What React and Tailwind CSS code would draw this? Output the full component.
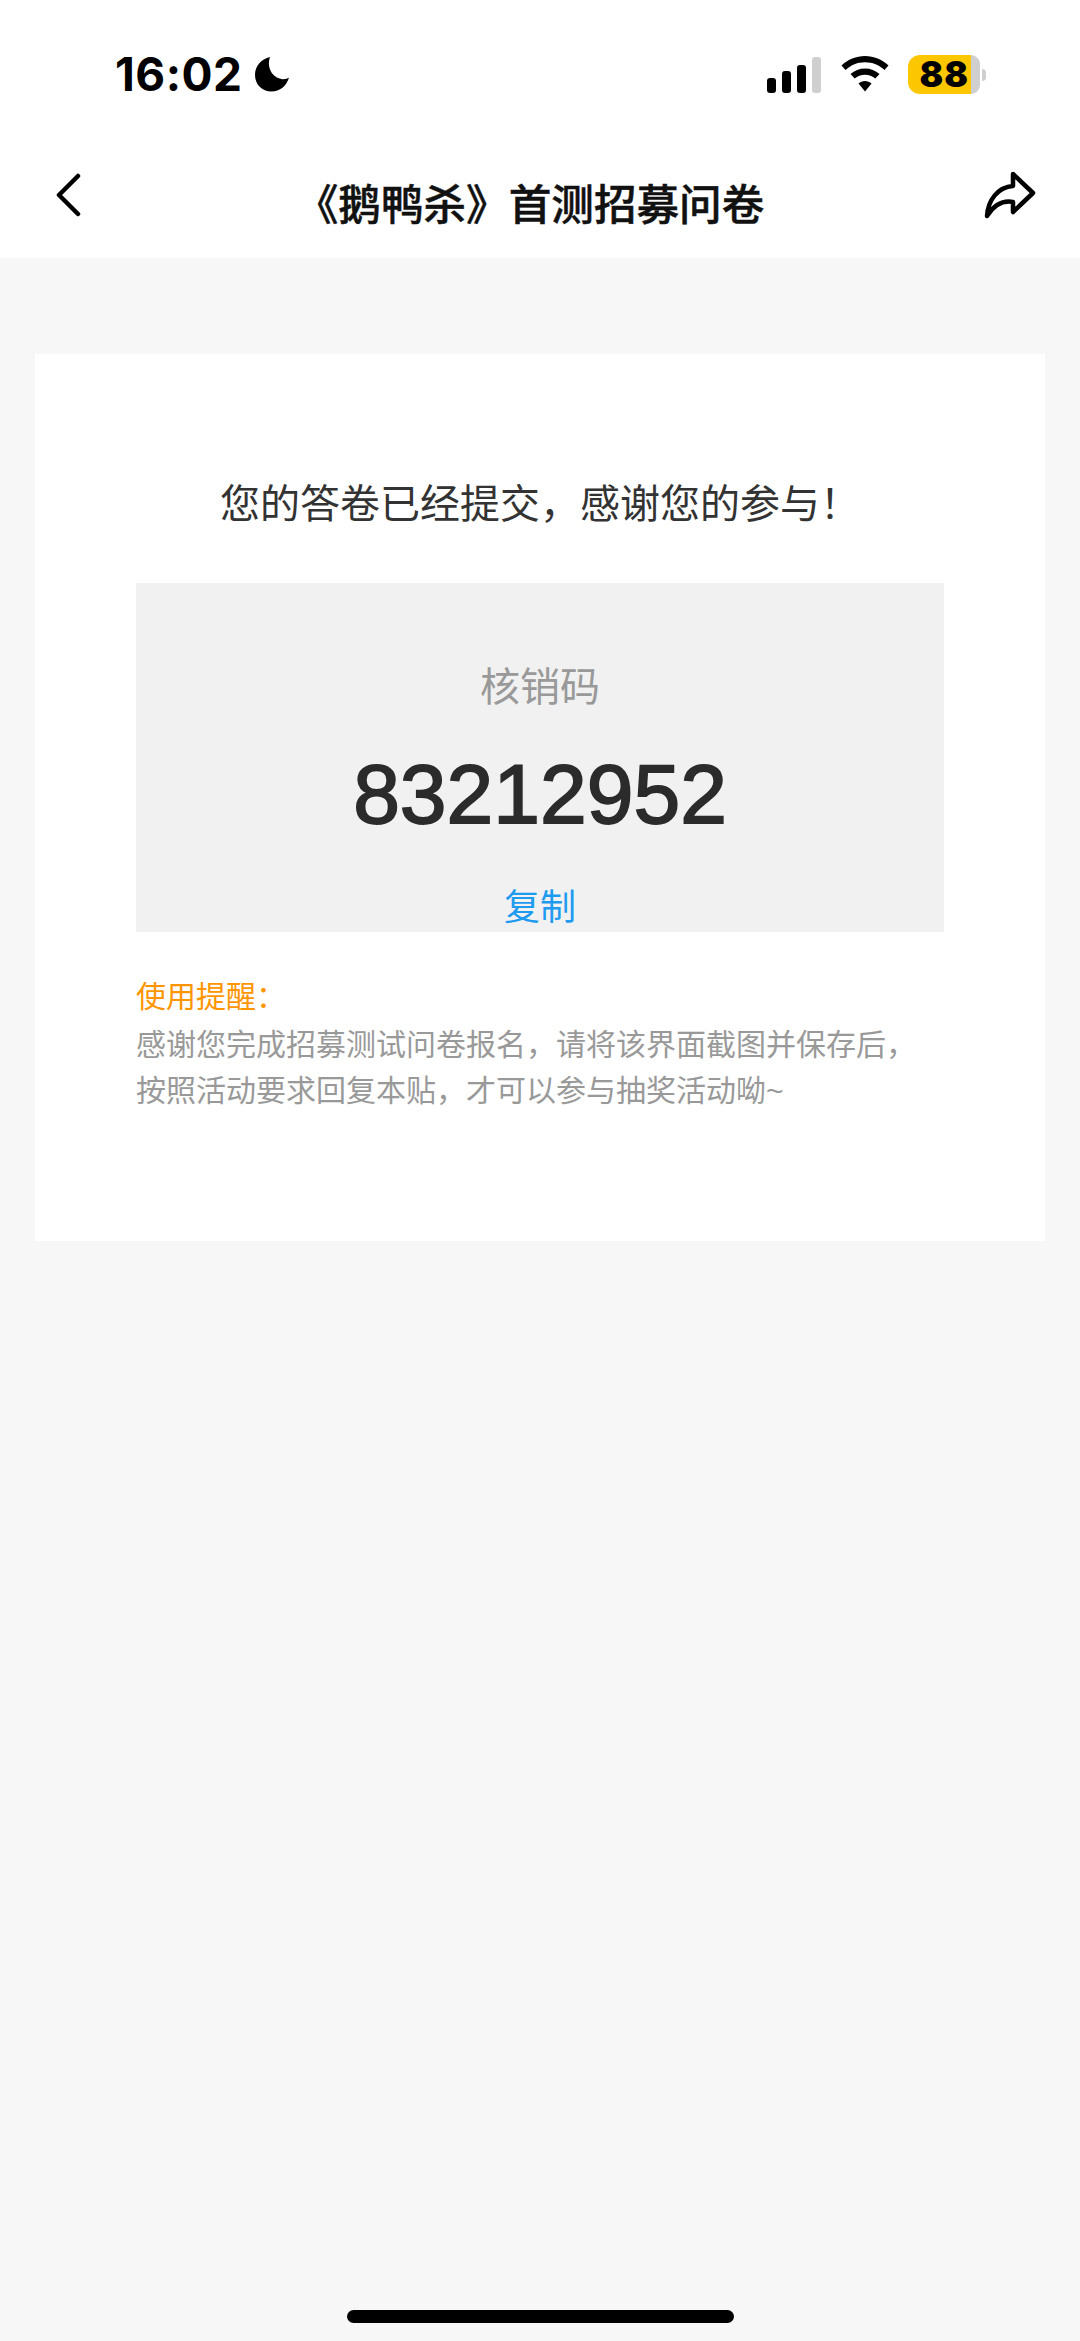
const cjk = "font-['Liberation_Sans','Noto_Sans_CJK_SC',sans-serif]"

// full-width punctuation, written as escapes so it stays full width
const COMMA = '\uFF0C'
const BANG = '\uFF01'
const COLON = '\uFF1A'

function StatusBar() {
  return (
    <div className="h-[132px] flex items-start justify-between pl-[115px] pr-[94px] pt-[51px]">
      <div className="flex items-center gap-[12px]">
        <span className="font-['Inter',sans-serif] font-bold text-[46px] leading-[46px] text-black tracking-[0.5px]">16:02</span>
        <svg width="35" height="36" viewBox="0 0 35 36">
          <path d="M15 1C6 3 0 10 0 19c0 9.500 7 16.500 16.500 16.500 8.500 0 15-5.500 17.500-14-2 1.500-5 2-7.500 1.500C17 21.500 11.500 11 15 1z" fill="#000" />
        </svg>
      </div>
      <div className="flex items-start">
        <svg width="55" height="36" viewBox="0 0 55 36" className="mt-[6px] mr-[19px]">
          <rect x="0" y="21" width="9" height="15" rx="3" fill="#000" />
          <rect x="15" y="14" width="9" height="22" rx="3" fill="#000" />
          <rect x="30" y="8" width="9" height="28" rx="3" fill="#000" />
          <rect x="45" y="0" width="9" height="36" rx="3" fill="#cfcfcf" />
        </svg>
        <svg width="48" height="36" viewBox="0 0 48 36" className="mt-[5px] mr-[19px]">
          <path d="M24 0c9 0 17 3.500 23.500 9.500l-4 4.500C38 9 31.500 6.300 24 6.300S10 9 4.500 14l-4-4.500C7 3.500 15 0 24 0z" fill="#000" />
          <path d="M24 12.500c5.500 0 10.500 2 14.500 5.500l-4.200 4.600c-2.800-2.400-6.300-3.800-10.300-3.800s-7.500 1.400-10.300 3.800L9.500 18c4-3.500 9-5.500 14.500-5.500z" fill="#000" />
          <path d="M24 25c2.500 0 4.800 1 6.500 2.400L24 35.500l-6.500-8.100C19.200 26 21.500 25 24 25z" fill="#000" />
        </svg>
        <div className="flex items-center mt-[4px]">
          <div className="w-[63px] h-[39px] bg-[#fdc700] rounded-l-[12px] flex items-center justify-end pr-[2px]">
            <span className="font-['Inter',sans-serif] font-black text-[35px] leading-none text-black tracking-[1px]">88</span>
          </div>
          <div className="w-[9px] h-[39px] bg-[#cfcfcf] rounded-r-[10px]" />
          <div className="w-[4px] h-[12px] ml-[2px] bg-[#cfcfcf] rounded-r-[4px]" />
        </div>
      </div>
    </div>
  )
}

function NavBar() {
  return (
    <div className="h-[126px] flex items-start justify-between pl-[55px] pr-[44px]">
      <svg width="26" height="44" viewBox="0 0 26 44" className="mt-[41px]">
        <path d="M23 3L4 22l19 19" fill="none" stroke="#000" strokeWidth="4.500" strokeLinecap="round" strokeLinejoin="round" />
      </svg>
      <h1 className={`${cjk} mt-[49px] -ml-[5px] font-medium text-[42.6px] leading-[48px] text-[#111] [-webkit-text-stroke:0.5px_#111]`}>《鹅鸭杀》首测招募问卷</h1>
      <svg width="52" height="48" viewBox="0 0 52 48" className="mt-[39px]">
        <path d="M29 3l20 19-20 19V31C18 29 10 34 3 45 4 29 14 16 29 15z" fill="none" stroke="#000" strokeWidth="4.500" strokeLinejoin="round" strokeLinecap="round" />
      </svg>
    </div>
  )
}

export default function App() {
  return (
    <div className={`${cjk} w-[1080px] h-[2341px] bg-[#f7f7f7] flex flex-col relative`}>
      <div className="bg-white">
        <StatusBar />
        <NavBar />
      </div>
      <div className="mt-[96px] mx-[35px] h-[887px] bg-white px-[101px] pt-[122px]">
        <p className="text-center text-[40px] leading-[56px] text-[#333]">{`您的答卷已经提交${COMMA}感谢您的参与${BANG}`}</p>
        <div className="mt-[51px] h-[349px] bg-[#f1f1f1] flex flex-col items-center pt-[79px]">
          <div className="text-[40px] leading-[50px] text-[#999]">核销码</div>
          <div className="mt-[34px] text-[84px] leading-[96px] text-[#2b2b2b] [-webkit-text-stroke:1.8px_#2b2b2b]">83212952</div>
          <div className="mt-[44px] text-[36px] leading-[44px] text-[#1e9bf0]">复制</div>
        </div>
        <div className="mt-[42px] text-[30px] leading-[46px] text-[#ff9500]">{`使用提醒${COLON}`}</div>
        <p className="mt-[2px] text-[30px] leading-[46px] text-[#999]">
          {`感谢您完成招募测试问卷报名${COMMA}请将该界面截图并保存后${COMMA}`}<br />
          {`按照活动要求回复本贴${COMMA}才可以参与抽奖活动呦~`}
        </p>
      </div>
      <div className="absolute bottom-[18px] left-[347px] w-[387px] h-[13px] rounded-full bg-black" />
    </div>
  )
}
